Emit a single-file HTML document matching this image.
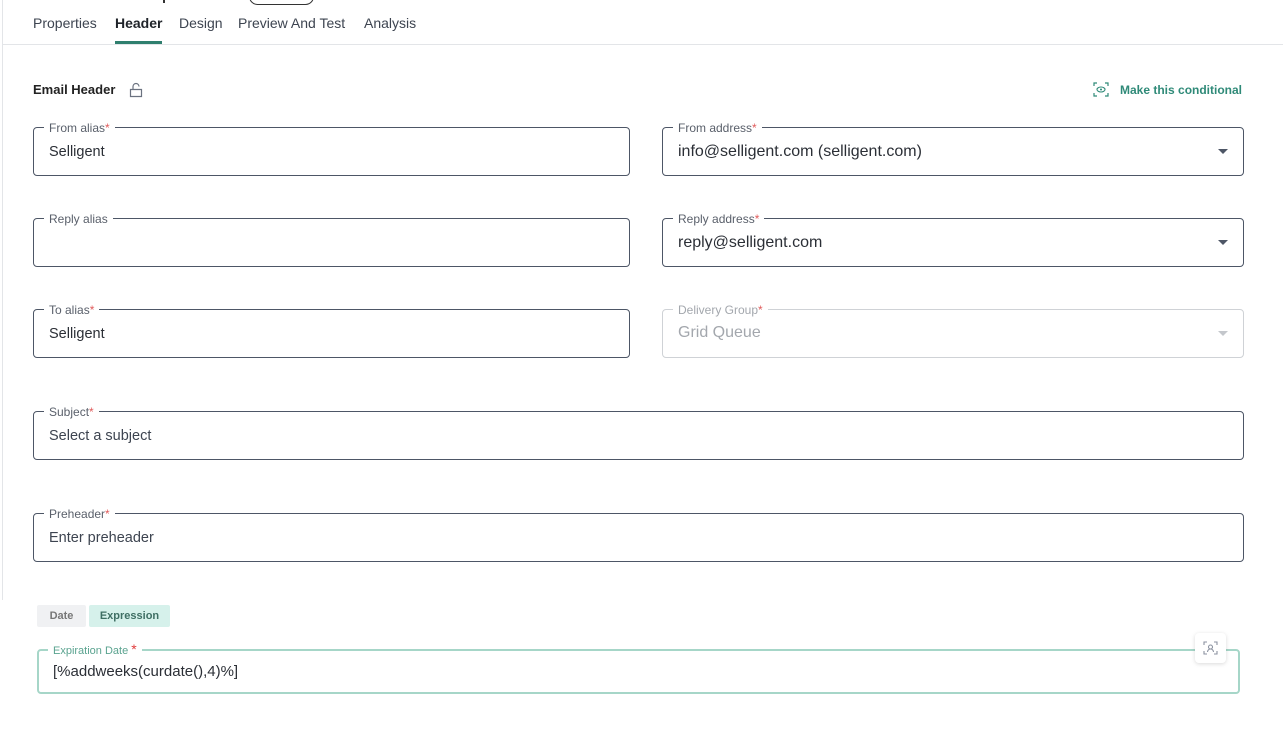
<!DOCTYPE html>
<html><head><meta charset="utf-8"><style>
*{box-sizing:border-box;margin:0;padding:0}
body{width:1283px;height:752px;background:#fff;font-family:"Liberation Sans",Arial,sans-serif;position:relative;overflow:hidden;color:#222}
.abs{position:absolute}
.tab{position:absolute;top:15px;font-size:14px;color:#3d4450}
.f{position:absolute;border:1px solid #4d5666;border-radius:4px;height:49px}
.f .l{position:absolute;top:-7px;left:10px;background:#fff;padding:0 5px;font-size:12px;color:#5a606b;line-height:14px}
.f .l i{font-style:normal;color:#e05b5b}
.f .v{position:absolute;left:15px;top:16px;font-size:14.5px;color:#2b2f36}
.f .arr{position:absolute;right:15px;top:21px;width:0;height:0;border-left:5px solid transparent;border-right:5px solid transparent;border-top:5px solid #4d5666}
</style></head><body>
<div class="abs" style="left:2px;top:0;width:1px;height:600px;background:#e3e5e8"></div>
<div class="abs" style="left:249px;top:-12px;width:65px;height:17px;border:1px solid #333;border-radius:9px"></div>
<div class="abs" style="left:163px;top:0;width:2px;height:3px;background:#333"></div>
<div class="tab" style="left:33px">Properties</div>
<div class="tab" style="left:115px;font-weight:bold;color:#1f2329">Header</div>
<div class="tab" style="left:179px">Design</div>
<div class="tab" style="left:238px">Preview And Test</div>
<div class="tab" style="left:364px">Analysis</div>
<div class="abs" style="left:115px;top:41px;width:47px;height:3px;background:#2f7f6e"></div>
<div class="abs" style="left:3px;top:44px;width:1280px;height:1px;background:#e3e5e8"></div>
<div class="abs" style="left:33px;top:82px;font-size:13px;font-weight:bold;color:#222">Email Header</div>
<svg class="abs" style="left:128px;top:81px" width="16" height="17" viewBox="0 0 16 17"><path d="M2.5 8.5h11v7h-11z" fill="none" stroke="#6b7280" stroke-width="1.2"/><path d="M5 8.5V5.5a3 3 0 0 1 6 0" fill="none" stroke="#6b7280" stroke-width="1.2"/></svg>
<svg class="abs" style="left:1093px;top:82px" width="16" height="15" viewBox="0 0 16 15"><path d="M1 4V1h3M12 1h3v3M15 11v3h-3M4 14H1v-3" fill="none" stroke="#2f8a78" stroke-width="1.2"/><ellipse cx="8" cy="7.5" rx="4" ry="2.5" fill="none" stroke="#2f8a78" stroke-width="1.1"/><circle cx="8" cy="7.5" r="1" fill="#2f8a78"/></svg>
<div class="abs" style="left:1120px;top:83px;font-size:12px;font-weight:bold;color:#2f8a78">Make this conditional</div>

<div class="f" style="left:33px;top:127px;width:597px"><span class="l">From alias<i>*</i></span><span class="v">Selligent</span></div>
<div class="f" style="left:662px;top:127px;width:582px"><span class="l">From address<i>*</i></span><span class="v" style="font-size:16px;top:15px">info@selligent.com (selligent.com)</span><span class="arr"></span></div>
<div class="f" style="left:33px;top:218px;width:597px"><span class="l">Reply alias</span></div>
<div class="f" style="left:662px;top:218px;width:582px"><span class="l">Reply address<i>*</i></span><span class="v" style="font-size:16px;top:15px">reply@selligent.com</span><span class="arr"></span></div>
<div class="f" style="left:33px;top:309px;width:597px"><span class="l">To alias<i>*</i></span><span class="v">Selligent</span></div>
<div class="f" style="left:662px;top:309px;width:582px;border-color:#cfd2d6"><span class="l" style="color:#a3a7ad">Delivery Group<i>*</i></span><span class="v" style="font-size:16px;top:14px;color:#a3a7ad">Grid Queue</span><span class="arr" style="border-top-color:#c4c7cc"></span></div>
<div class="f" style="left:33px;top:411px;width:1211px"><span class="l">Subject<i>*</i></span><span class="v" style="color:#3d4450">Select a subject</span></div>
<div class="f" style="left:33px;top:513px;width:1211px"><span class="l">Preheader<i>*</i></span><span class="v" style="color:#3d4450">Enter preheader</span></div>

<div class="abs" style="left:37px;top:605px;width:49px;height:22px;background:#f0f1f3;border-radius:2px;font-size:11px;font-weight:bold;color:#777;text-align:center;line-height:22px">Date</div>
<div class="abs" style="left:89px;top:605px;width:81px;height:22px;background:#d6f1eb;border-radius:2px;font-size:11px;font-weight:bold;color:#3f6f64;text-align:center;line-height:22px">Expression</div>
<div class="abs" style="left:37px;top:649px;width:1203px;height:45px;border:2px solid #a6d6c8;border-radius:4px"></div>
<div class="abs" style="left:48px;top:641px;background:#fff;padding:0 5px;font-size:11px;color:#5aa38f">Expiration Date <span style="color:#e03c3c;font-size:14px">*</span></div>
<div class="abs" style="left:53px;top:663px;font-size:15px;color:#2b2f36">[%addweeks(curdate(),4)%]</div>
<div class="abs" style="left:1195px;top:633px;width:31px;height:30px;background:#fff;border-radius:4px;box-shadow:0 1px 4px rgba(0,0,0,.15)"></div>
<svg class="abs" style="left:1203px;top:641px" width="15" height="14" viewBox="0 0 15 14"><path d="M1 4V1h3M11 1h3v3M14 10v3h-3M4 13H1v-3" fill="none" stroke="#8b92a0" stroke-width="1.1"/><circle cx="7.5" cy="6" r="2" fill="none" stroke="#8b92a0" stroke-width="1.1"/><path d="M4.5 11a3 3 0 0 1 6 0" fill="none" stroke="#8b92a0" stroke-width="1.1"/></svg>
</body></html>
